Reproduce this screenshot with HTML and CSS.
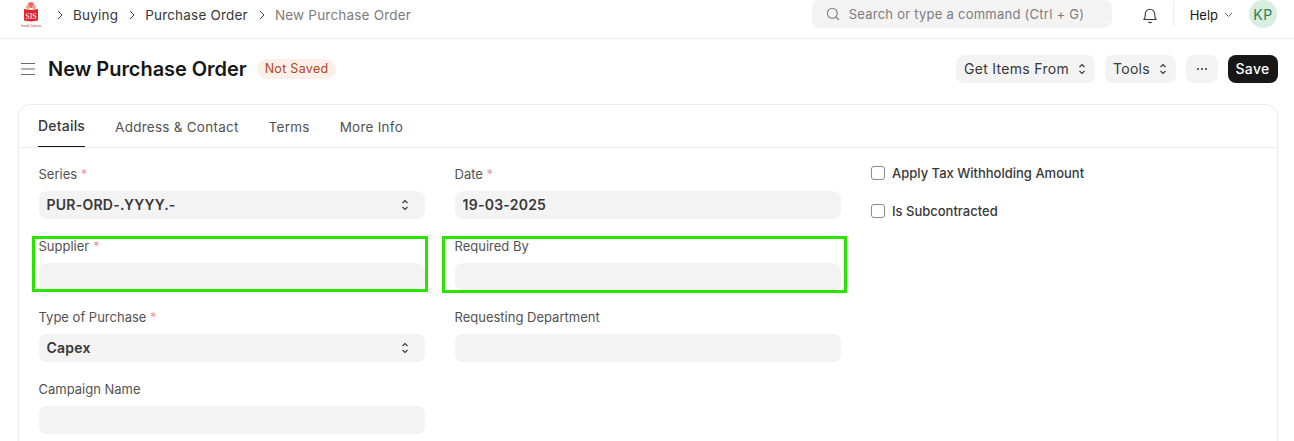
FILE: index.html
```html
<!DOCTYPE html>
<html lang="en">
<head>
    <meta charset="UTF-8">
    <meta name="viewport" content="width=device-width, initial-scale=1.0">
    <title>New Purchase Order</title>
    <link rel="stylesheet" href="styles.css">
</head>
<body>

    <header class="navbar">
        <svg class="logo" width="24" height="28" viewBox="0 0 24 28">
            <circle cx="12" cy="5" r="3" fill="#ee6b5b"/>
            <circle cx="9" cy="7" r="2" fill="#f3a08f"/>
            <circle cx="15" cy="7" r="2" fill="#f3a08f"/>
            <path d="M5 9 L12 10 L19 9 V20.500 L12 21.500 L5 20.500 Z" fill="#e2262b"/>
            <text x="12" y="18.500" class="logo-mark" text-anchor="middle">SIS</text>
            <text x="12" y="26.500" class="logo-sub" text-anchor="middle">South Jakarta</text>
        </svg>
        <nav class="crumbs">
            <svg class="crumb-arrow" width="6" height="10" viewBox="0 0 6 10"><path d="M1 1l4 4-4 4"/></svg>
            <a>Buying</a>
            <svg class="crumb-arrow" width="6" height="10" viewBox="0 0 6 10"><path d="M1 1l4 4-4 4"/></svg>
            <a>Purchase Order</a>
            <svg class="crumb-arrow" width="6" height="10" viewBox="0 0 6 10"><path d="M1 1l4 4-4 4"/></svg>
            <a class="current">New Purchase Order</a>
        </nav>
        <div class="search">
            <svg width="14" height="14" viewBox="0 0 14 14" fill="none" stroke="#7c7c7c" stroke-width="1.1"><circle cx="6.300" cy="6.300" r="5"/><path d="M10 10l3 3"/></svg>
            <span>Search or type a command (Ctrl + G)</span>
        </div>
        <svg class="bell" width="16" height="18" viewBox="0 0 16 18" fill="none" stroke="#3a3a3a" stroke-width="1.1"><path d="M2 13.500c1-1.200 1.300-2.400 1.300-5.500a4.700 4.700 0 0 1 9.400 0c0 3.100.3 4.300 1.300 5.500z"/><path d="M6.300 15.800c.9.800 2.500.800 3.400 0"/></svg>
        <div class="nav-divider"></div>
        <div class="help">Help
            <svg width="9" height="6" viewBox="0 0 9 6" fill="none" stroke="#555" stroke-width="0.9"><path d="M1 1l3.500 3.500L8 1"/></svg>
        </div>
        <div class="avatar">KP</div>
    </header>

    <div class="page-head">
        <svg class="menu-icon" width="14" height="14" viewBox="0 0 14 14" stroke="#6b6b6b" stroke-width="1.200"><path d="M0 1.500h14M0 7h14M0 12.500h14"/></svg>
        <h1>New Purchase Order</h1>
        <span class="badge">Not Saved</span>
        <div class="actions">
            <button class="btn">Get Items From
                <svg class="updown" width="8" height="12" viewBox="0 0 8 12"><path d="M1.500 4L4 1.500 6.500 4M1.500 8L4 10.500 6.500 8"/></svg>
            </button>
            <button class="btn">Tools
                <svg class="updown" width="8" height="12" viewBox="0 0 8 12"><path d="M1.500 4L4 1.500 6.500 4M1.500 8L4 10.500 6.500 8"/></svg>
            </button>
            <button class="btn btn-more">
                <svg width="12" height="4" viewBox="0 0 12 4" fill="#333"><circle cx="2" cy="2" r="1"/><circle cx="6" cy="2" r="1"/><circle cx="10" cy="2" r="1"/></svg>
            </button>
            <button class="btn btn-save">Save</button>
        </div>
    </div>

    <main class="card">
        <div class="tabs">
            <a class="tab active">Details</a>
            <a class="tab">Address &amp; Contact</a>
            <a class="tab">Terms</a>
            <a class="tab">More Info</a>
        </div>
        <div class="form">
            <div class="column">
                <div class="field">
                    <label>Series <i>*</i></label>
                    <div class="control">PUR-ORD-.YYYY.-
                        <svg class="updown" width="8" height="12" viewBox="0 0 8 12"><path d="M1.500 4L4 1.500 6.500 4M1.500 8L4 10.500 6.500 8"/></svg>
                    </div>
                </div>
                <div class="field">
                    <label>Supplier <i>*</i></label>
                    <div class="control"></div>
                    <div class="mark mark-left"></div>
                </div>
                <div class="field">
                    <label>Type of Purchase <i>*</i></label>
                    <div class="control">Capex
                        <svg class="updown" width="8" height="12" viewBox="0 0 8 12"><path d="M1.500 4L4 1.500 6.500 4M1.500 8L4 10.500 6.500 8"/></svg>
                    </div>
                </div>
                <div class="field">
                    <label>Campaign Name</label>
                    <div class="control"></div>
                </div>
            </div>
            <div class="column">
                <div class="field">
                    <label>Date <i>*</i></label>
                    <div class="control">19-03-2025</div>
                </div>
                <div class="field">
                    <label>Required By</label>
                    <div class="control"></div>
                    <div class="mark mark-right"></div>
                </div>
                <div class="field">
                    <label>Requesting Department</label>
                    <div class="control"></div>
                </div>
            </div>
            <div class="column checks">
                <div class="check"><span class="box"></span>Apply Tax Withholding Amount</div>
                <div class="check"><span class="box"></span>Is Subcontracted</div>
            </div>
        </div>
    </main>

</body>
</html>
```

FILE: styles.css
```css
html, body {
    height: 100%;
    overflow: hidden;
}

body {
    margin: 0;
    font-family: 'Inter', sans-serif;
    font-size: 13px;
    color: #383838;
    background-color: #fff;
}

/* Barra superior */
.navbar {
    display: flex;
    align-items: center;
    height: 38px;
    box-sizing: content-box;
    padding-left: 19px;
    border-bottom: 1px solid #ededed;
}

.navbar > * {
    margin-bottom: 10px;
}

.logo {
    flex: none;
}

.logo-mark {
    font-family: 'Liberation Serif', serif;
    font-size: 8px;
    fill: #fff;
}

.logo-sub {
    font-family: 'Liberation Serif', serif;
    font-size: 3.800px;
    fill: #b5433e;
}

.crumbs {
    display: flex;
    align-items: center;
    margin-left: 14px;
    padding-top: 1px;
    font-size: 13.500px;
    letter-spacing: 0.2px;
}

.crumb-arrow {
    fill: none;
    stroke: #444;
    stroke-width: 1;
    margin-right: 10px;
}

.crumbs a {
    margin-right: 11px;
    color: #383838;
}

.crumbs a.current {
    color: #7c7c7c;
}

.search {
    display: flex;
    align-items: center;
    gap: 9px;
    width: 300px;
    height: 28px;
    box-sizing: border-box;
    margin-left: auto;
    padding-left: 14px;
    border-radius: 8px;
    background-color: #f3f3f3;
    color: #7c7c7c;
    letter-spacing: 0.25px;
}

.bell {
    margin-left: 30px;
    padding-top: 2px;
}

.nav-divider {
    width: 1px;
    height: 24px;
    margin-left: 15px;
    margin-right: 16px;
    background-color: #ededed;
}

.help {
    display: flex;
    align-items: center;
    gap: 6px;
    padding-top: 1px;
    color: #171717;
    font-size: 13px;
}

.avatar {
    display: flex;
    align-items: center;
    justify-content: center;
    width: 28px;
    height: 28px;
    margin-left: 16px;
    margin-right: 17px;
    border-radius: 50%;
    background-color: #d8efdf;
    color: #30805a;
    font-size: 14px;
    letter-spacing: 0.5px;
}

/* Cabecera de la pagina */
.page-head {
    display: flex;
    align-items: center;
    height: 60px;
    margin-bottom: 5px;
    padding-left: 21px;
    padding-right: 16px;
}

.menu-icon {
    flex: none;
}

h1 {
    margin: 0 0 0 13px;
    font-size: 20px;
    font-weight: 600;
    letter-spacing: -0.05px;
    color: #171717;
}

.badge {
    margin-left: 10px;
    padding: 2px 8px;
    border-radius: 10px;
    background-color: #fdf0e8;
    color: #b4451f;
    font-size: 12.500px;
    line-height: 16px;
    letter-spacing: 0.3px;
}

.actions {
    display: flex;
    gap: 10px;
    margin-left: auto;
}

.btn {
    display: flex;
    align-items: center;
    gap: 9px;
    height: 28px;
    padding: 0 9px 1px 8px;
    border: none;
    border-radius: 8px;
    background-color: #f3f3f3;
    color: #383838;
    font-family: inherit;
    font-size: 14px;
    letter-spacing: 0.3px;
}

.btn-more {
    width: 32px;
    justify-content: center;
}

.btn-save {
    width: 50px;
    justify-content: center;
    background-color: #171717;
    color: #fff;
    font-weight: 500;
}

.updown {
    flex: none;
    fill: none;
    stroke: #383838;
    stroke-width: 1.100;
}

/* Tarjeta del formulario */
.card {
    margin-left: 18px;
    margin-right: 16px;
    padding-bottom: 40px;
    border: 1px solid #ededed;
    border-radius: 12px;
}

.tabs {
    display: flex;
    gap: 30px;
    height: 42px;
    padding-left: 19px;
    border-bottom: 1px solid #ededed;
}

.tab {
    display: flex;
    align-items: center;
    height: 42px;
    box-sizing: border-box;
    padding-top: 2px;
    color: #525252;
    font-size: 13.500px;
    letter-spacing: 0.25px;
}

.tab.active {
    padding-top: 0;
    border-bottom: 1px solid #171717;
    color: #383838;
    font-size: 14px;
    font-weight: 500;
    letter-spacing: 0.2px;
}

.form {
    display: flex;
    gap: 30px;
    padding: 18px 20px 0;
}

.column {
    display: flex;
    flex-direction: column;
    gap: 18.500px;
    width: 386px;
}

.field {
    position: relative;
}

label {
    display: block;
    height: 17px;
    margin-bottom: 8px;
    margin-left: -0.5px;
    color: #525252;
    font-size: 13px;
    line-height: 17px;
}

label i {
    color: #e99999;
    font-style: normal;
}

.control {
    display: flex;
    align-items: center;
    justify-content: space-between;
    height: 28px;
    padding: 0 16px 1px 7.500px;
    box-sizing: border-box;
    border-radius: 8px;
    background-color: #f3f3f3;
    color: #383838;
    font-size: 14px;
    font-weight: 600;
    letter-spacing: 0.25px;
}

/* Recuadros verdes de la captura */
.mark {
    position: absolute;
    top: -2px;
    height: 50px;
    border: 3px solid #2be500;
}

.mark-left {
    left: -7px;
    width: 390px;
}

.mark-right {
    left: -13px;
    width: 399px;
    height: 51px;
}

.checks {
    gap: 20px;
    margin-top: -2px;
}

.check {
    display: flex;
    align-items: center;
    gap: 7px;
    height: 18px;
    color: #383838;
    font-size: 13px;
    font-weight: 500;
}

.box {
    flex: none;
    width: 12px;
    height: 12px;
    border: 1px solid #8c8c8c;
    border-radius: 3px;
}
```
